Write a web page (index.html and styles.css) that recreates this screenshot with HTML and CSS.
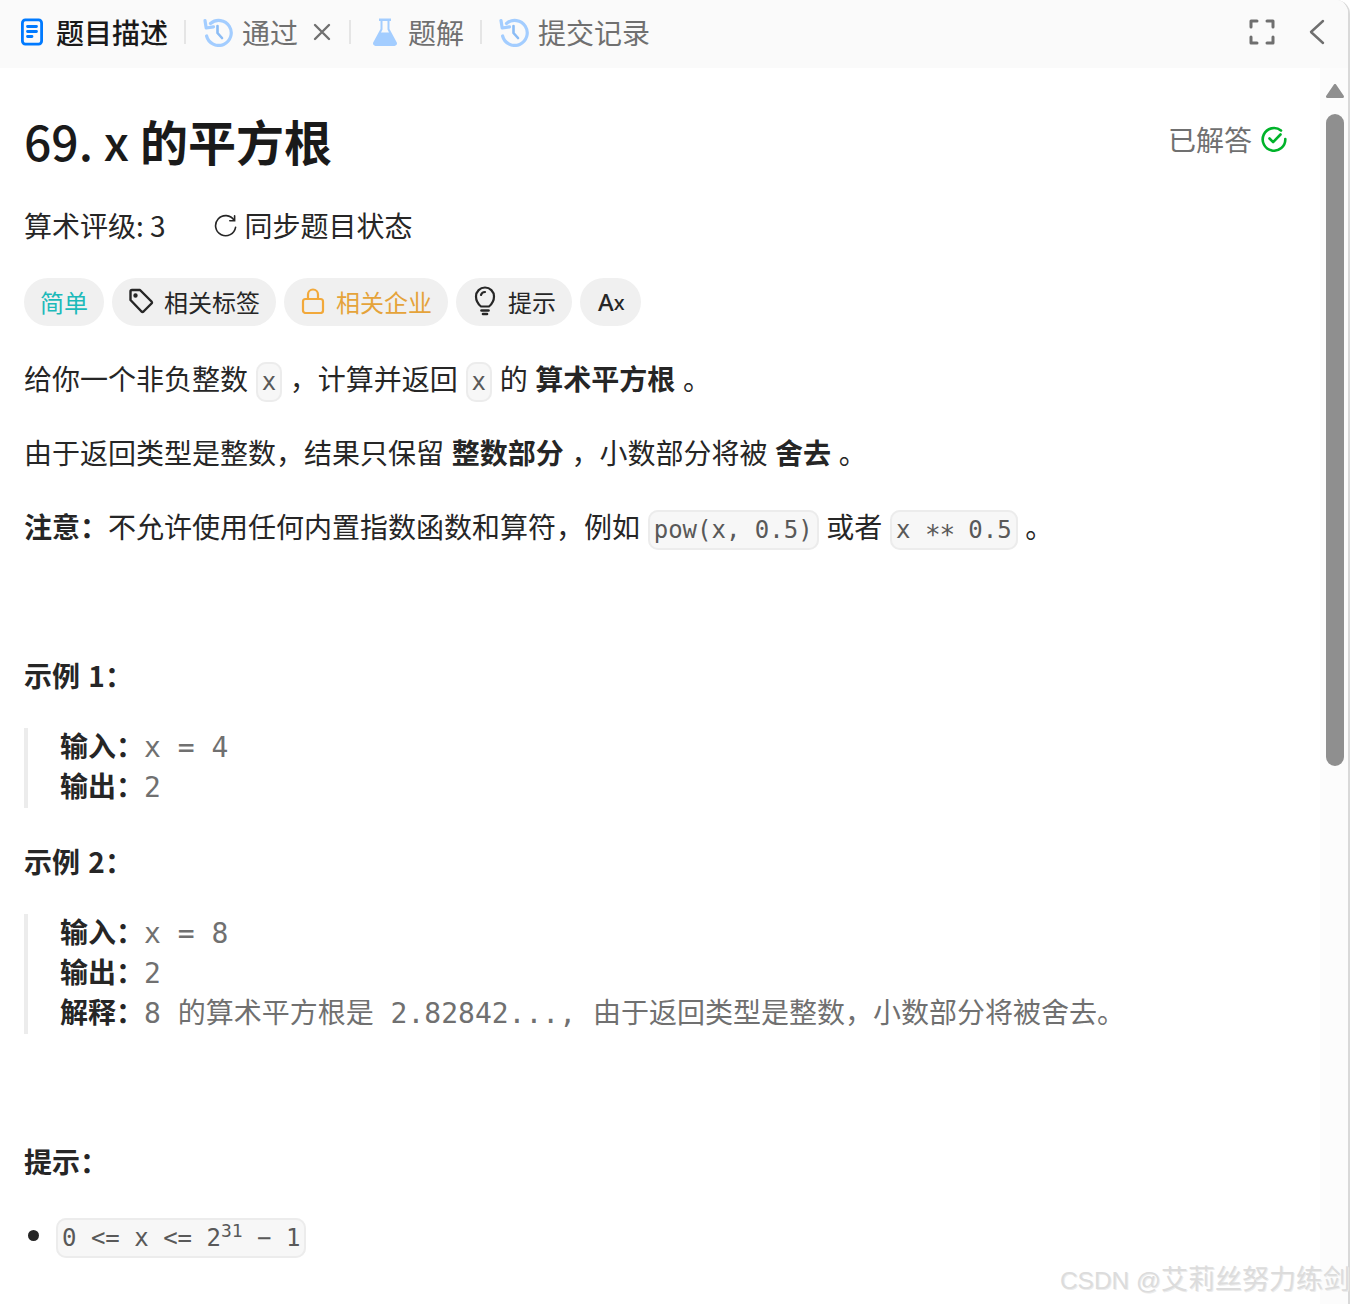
FILE: index.html
```html
<!DOCTYPE html>
<html lang="zh-CN">

<head>
    <meta charset="UTF-8">
    <title>69. x 的平方根</title>
    <link rel="stylesheet" href="styles.css">
</head>

<body>
    <div class="app">
        <!-- Tabs -->
        <header class="tabs">
            <div class="tab active">
                <svg class="tab-icon" viewBox="0 0 24 28" fill="none" stroke="#007aff" stroke-width="2.800" stroke-linecap="round">
                    <rect x="2.400" y="1.900" width="19.200" height="24.200" rx="3"/>
                    <path d="M7.500 8.500h9M7.500 13.500h9M7.500 18.500h4.500"/>
                </svg>
                <span>题目描述</span>
            </div>
            <i class="sep"></i>
            <div class="tab">
                <svg class="tab-icon history" viewBox="0 0 30 30" fill="none" stroke="#a3cdff" stroke-width="3.200" stroke-linecap="round" stroke-linejoin="round">
                    <path d="M7.500 6.500A12.500 12.500 0 1 1 3.600 19"/>
                    <path d="M2 3.500l1.200 7.500 7.300-1.200" />
                    <path d="M14.500 9v7l4.500 5" stroke="#8bbcf5" stroke-width="2.600"/>
                </svg>
                <span>通过</span>
                <svg class="close" viewBox="0 0 20 20" fill="none" stroke="#707070" stroke-width="2.400" stroke-linecap="round">
                    <path d="M3 3l14 14M17 3L3 17"/>
                </svg>
            </div>
            <i class="sep"></i>
            <div class="tab">
                <svg class="tab-icon flask" viewBox="0 0 26 30">
                    <path d="M7 1.500h12v2.500h-1.500v8L24.800 25.500A2.600 2.600 0 0 1 22.500 29h-19a2.600 2.600 0 0 1-2.300-3.500L8.500 12V4H7z" fill="#a3cdff"/>
                    <path d="M10.500 4h5v8.500l1.500 3H9l1.500-3z" fill="#fafafa"/>
                </svg>
                <span>题解</span>
            </div>
            <i class="sep"></i>
            <div class="tab">
                <svg class="tab-icon history" viewBox="0 0 30 30" fill="none" stroke="#a3cdff" stroke-width="3.200" stroke-linecap="round" stroke-linejoin="round">
                    <path d="M7.500 6.500A12.500 12.500 0 1 1 3.600 19"/>
                    <path d="M2 3.500l1.200 7.500 7.300-1.200" />
                    <path d="M14.500 9v7l4.500 5" stroke="#8bbcf5" stroke-width="2.600"/>
                </svg>
                <span>提交记录</span>
            </div>
            <div class="tab-tools">
                <svg class="expand" viewBox="0 0 26 26" fill="none" stroke="#6f6f6f" stroke-width="3" stroke-linecap="round" stroke-linejoin="round">
                    <path d="M8 2H2v6M18 2h6v6M8 24H2v-6M18 24h6v-6"/>
                </svg>
                <svg class="back" viewBox="0 0 16 26" fill="none" stroke="#6f6f6f" stroke-width="2.400" stroke-linecap="round" stroke-linejoin="round">
                    <path d="M14 2L2 13l12 11"/>
                </svg>
            </div>
        </header>

        <div class="body">
            <main class="content">
                <div class="title-row">
                    <h1><span class="title-num">69. x</span> 的平方根</h1>
                    <div class="solved">
                        <span>已解答</span>
                        <svg viewBox="0 0 26 26" fill="none" stroke="#00b32a" stroke-width="2.600" stroke-linecap="round" stroke-linejoin="round">
                            <path d="M20 4.500A11.300 11.300 0 1 0 24.300 13"/>
                            <path d="M8.500 12.500l3.600 3.600L19.500 8.500"/>
                        </svg>
                    </div>
                </div>

                <div class="meta">
                    <span>算术评级: 3</span>
                    <span class="sync">
                        <svg viewBox="0 0 24 24" fill="none" stroke="#262626" stroke-width="1.700" stroke-linecap="round">
                            <path d="M21 6.500A10.500 10.500 0 1 0 22.500 14"/>
                            <path d="M21.500 2v5h-5"/>
                        </svg>
                        同步题目状态
                    </span>
                </div>

                <div class="chips">
                    <span class="chip easy">简单</span>
                    <span class="chip">
                        <svg viewBox="0 0 26 26" fill="none" stroke="#262626" stroke-width="2.400" stroke-linejoin="round">
                            <path d="M2.500 3.500a1.500 1.500 0 0 1 1.500-1.500h8l11.500 11.500a1.500 1.500 0 0 1 0 2l-8 8a1.500 1.500 0 0 1-2 0L2.500 12z"/>
                            <circle cx="7.500" cy="7.500" r="1" fill="#262626"/>
                        </svg>
                        相关标签
                    </span>
                    <span class="chip company">
                        <svg viewBox="0 0 24 26" fill="none" stroke="#f2a93b" stroke-width="2.200">
                            <rect x="2" y="11" width="20" height="14" rx="2.500"/>
                            <path d="M7 11V6.500a5 5 0 0 1 10 0V11"/>
                        </svg>
                        相关企业
                    </span>
                    <span class="chip">
                        <svg class="bulb" viewBox="0 0 22 30" fill="none" stroke="#262626" stroke-width="2.200" stroke-linecap="round">
                            <path d="M7 20.500C4 18 2 15 2 10.500a9 9 0 0 1 18 0c0 4.500-2 7.500-5 10z"/>
                            <path d="M7.500 24.500h7" stroke-width="2.600"/>
                            <path d="M9 28h4" stroke-width="2.600"/>
                            <path d="M7 9c.5-2 2-3 4-3"/>
                        </svg>
                        提示
                    </span>
                    <span class="chip lang"><b>A</b><em>x</em></span>
                </div>

                <p>给你一个非负整数 <code>x</code> ，计算并返回 <code>x</code> 的 <strong>算术平方根</strong> 。</p>
                <p>由于返回类型是整数，结果只保留 <strong>整数部分</strong> ，小数部分将被 <strong>舍去</strong> 。</p>
                <p><strong>注意：</strong>不允许使用任何内置指数函数和算符，例如 <code>pow(x, 0.5)</code> 或者 <code>x <span class="stars">**</span> 0.5</code> 。</p>

                <h3 class="first-example">示例 1：</h3>
                <pre><strong>输入：</strong>x = 4
<strong>输出：</strong>2</pre>

                <h3>示例 2：</h3>
                <pre><strong>输入：</strong>x = 8
<strong>输出：</strong>2
<strong>解释：</strong>8 的算术平方根是 2.82842..., 由于返回类型是整数，小数部分将被舍去。</pre>

                <h3 class="hints">提示：</h3>
                <ul>
                    <li><code class="math">0 &lt;= x &lt;= 2<sup>31</sup> − 1</code></li>
                </ul>
            </main>

            <!-- Scrollbar -->
            <aside class="scroll">
                <svg class="scroll-up" viewBox="0 0 18 14">
                    <path d="M9 1.500L1.500 12.500h15z" fill="#8f8f8f" stroke="#8f8f8f" stroke-width="3" stroke-linejoin="round"/>
                </svg>
                <i class="scroll-thumb"></i>
            </aside>
        </div>
    </div>

    <div class="watermark"><span>CSDN @</span>艾莉丝努力练剑</div>
</body>

</html>
```

FILE: styles.css
```css
html,
body {
    margin: 0;
    height: 1304px;
    overflow: hidden;
    background: white;
}

body {
    font-family: "Noto Sans CJK SC", "Noto Sans", sans-serif;
    font-size: 28px;
    color: #262626;
    position: relative;
}

.app {
    width: 1348px;
    height: 1304px;
    border-right: 2px solid #d9d9d9;
    border-top-right-radius: 14px;
    display: flex;
    flex-direction: column;
    overflow: hidden;
}

/* Tabs */
.tabs {
    height: 68px;
    box-sizing: border-box;
    flex: none;
    background: #fafafa;
    display: flex;
    align-items: center;
    padding: 0 0 4px 20px;
}

.tab {
    display: flex;
    align-items: center;
    color: #707070;
    line-height: 40px;
}

.tab.active {
    color: #1a1a1a;
    font-weight: 500;
}

.tab-icon {
    width: 24px;
    height: 28px;
    margin-right: 12px;
}

.tab-icon.history {
    width: 30px;
    height: 30px;
    margin-right: 9px;
}

.tab-icon.flask {
    width: 26px;
    height: 30px;
    margin: 0 10px 0 4px;
}

.close {
    width: 20px;
    height: 20px;
    margin: 0 1px 0 14px;
}

.sep {
    width: 2px;
    height: 24px;
    background: #e5e5e5;
    margin: 0 17px 0 16px;
}

.tab-tools {
    margin-left: auto;
    display: flex;
    align-items: center;
    gap: 34px;
    padding-right: 23px;
}

.expand {
    width: 26px;
    height: 26px;
}

.back {
    width: 16px;
    height: 26px;
}

.body {
    flex: 1;
    display: flex;
    min-height: 0;
}

.content {
    width: 1320px;
    flex: none;
    padding: 0 33px 0 24px;
    box-sizing: border-box;
}

.title-row {
    display: flex;
    align-items: center;
    justify-content: space-between;
    height: 64px;
    margin-top: 40px;
}

h1 {
    margin: 0;
    font-size: 48px;
    font-weight: 700;
    color: #1a1a1a;
    line-height: 64px;
}

.title-num {
    font-weight: 500;
}

.solved {
    display: flex;
    align-items: center;
    gap: 9px;
    color: #707070;
    margin-top: -2px;
}

.solved svg {
    width: 26px;
    height: 26px;
}

.meta {
    display: flex;
    align-items: center;
    height: 40px;
    margin-top: 33px;
}

.sync {
    display: flex;
    align-items: center;
    margin-left: 48px;
}

.sync svg {
    width: 23px;
    height: 23px;
    margin-right: 8px;
}

.chips {
    display: flex;
    gap: 8px;
    margin-top: 33px;
    margin-bottom: 32px;
}

.chip {
    height: 48px;
    box-sizing: border-box;
    border-radius: 24px;
    background: #f0f0f0;
    padding: 0 16px 2px;
    display: flex;
    align-items: center;
    font-size: 24px;
    color: #262626;
}

.chip svg {
    width: 26px;
    height: 26px;
    margin-right: 10px;
}

.chip svg.bulb {
    width: 22px;
    height: 30px;
    margin: 0 12px 0 2px;
}

.chip.easy {
    color: #1cbaba;
}

.chip.company {
    color: #e5a33a;
}

.chip.lang {
    font-family: "Noto Sans", sans-serif;
    padding: 0 16px 2px 18px;
    font-size: 24px;
}

.chip.lang b {
    font-weight: 500;
}

.chip.lang em {
    font-style: normal;
    font-weight: 500;
    font-size: 20px;
    margin-top: 2px;
}

p {
    margin: 0 0 34px;
    line-height: 40px;
    word-spacing: 1.400px;
}

strong {
    font-weight: 700;
}

code {
    font-family: "DejaVu Sans Mono", monospace;
    font-size: 24px;
    line-height: 1;
    word-spacing: 0;
    color: #595959;
    background: #f7f7f7;
    border: 2px solid #ececec;
    border-radius: 10px;
    padding: 4px;
}

.stars {
    font-size: 26px;
    letter-spacing: -1.200px;
    vertical-align: -6px;
    line-height: 0;
}

h3 {
    margin: 0;
    font-size: 28px;
    line-height: 40px;
    font-weight: 700;
    word-spacing: 2px;
}

.first-example {
    margin-top: 109px;
}

pre {
    margin: 33px 0;
    padding-left: 32px;
    border-left: 4px solid #ececec;
    font-family: "DejaVu Sans Mono", "Noto Sans CJK SC", monospace;
    font-size: 28px;
    line-height: 40px;
    color: #707070;
}

pre strong {
    font-family: "Noto Sans CJK SC", sans-serif;
    color: #262626;
    line-height: 1;
}

.hints {
    margin-top: 107px;
}

ul {
    margin: 33px 0 0;
    padding-left: 32px;
}

li {
    line-height: 40px;
}

sup {
    font-size: 18px;
    line-height: 0;
}

/* Scrollbar */
.scroll {
    width: 28px;
    flex: none;
    background: #fcfcfc;
}

.scroll-up {
    display: block;
    margin: 16px 0 0 6px;
    width: 18px;
    height: 14px;
}

.scroll-thumb {
    display: block;
    margin: 16px 0 0 6px;
    width: 18px;
    height: 652px;
    border-radius: 9px;
    background: #8f8f8f;
}

/* overlay */
.watermark {
    position: absolute;
    right: 2px;
    bottom: 5px;
    font-family: "Liberation Sans", "Noto Sans CJK SC", sans-serif;
    font-size: 27px;
    line-height: 36px;
    white-space: nowrap;
    color: #dcdcdc;
    text-shadow: 1px 1px 0 #ececec;
}

.watermark span {
    font-size: 24.500px;
}
```
